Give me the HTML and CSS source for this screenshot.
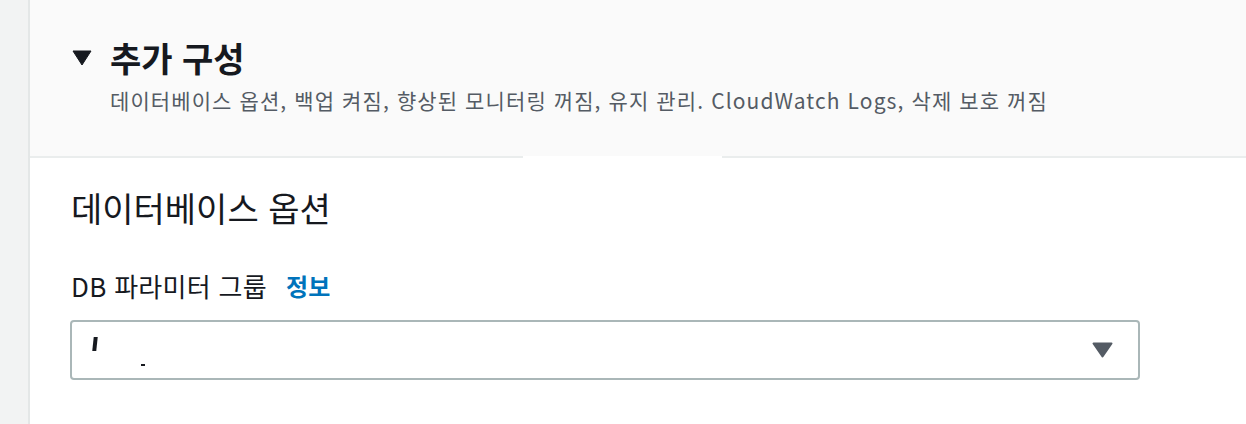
FILE: index.html
```html
<!DOCTYPE html>
<html lang="ko">
<head>
<meta charset="utf-8">
<link rel="stylesheet" href="styles.css">
</head>
<body>
<div class="page">
  <div class="rail"></div>
  <div class="panel">
    <div class="header">
      <div class="title-row">
        <svg class="caret" width="20" height="16" viewBox="0 0 20 16"><path d="M1 1 H19 L10 15 Z" fill="#16191f" stroke="#16191f" stroke-width="1" stroke-linejoin="round"/></svg>
        <h2 class="title">추가 구성</h2>
      </div>
      <div class="desc">데이터베이스 옵션, 백업 켜짐, 향상된 모니터링 꺼짐, 유지 관리. CloudWatch Logs, 삭제 보호 꺼짐</div>
      <div class="patch"></div>
    </div>
    <div class="body">
      <h3 class="section">데이터베이스 옵션</h3>
      <div class="label-row">
        <span class="label">DB 파라미터 그룹</span>
        <a class="info">정보</a>
      </div>
      <div class="select">
        <span class="value"><span class="mark1"></span><span class="mark2"></span></span>
        <svg class="arrow" width="21" height="16" viewBox="0 0 21 16"><path d="M1.5 1.5 H19.5 L10.5 14.5 Z" fill="#545b64" stroke="#545b64" stroke-width="2" stroke-linejoin="round"/></svg>
      </div>
    </div>
  </div>
</div>
</body>
</html>
```

FILE: styles.css
```css
* { box-sizing: border-box; }
html, body { margin: 0; padding: 0; }
body {
  width: 1246px;
  height: 424px;
  overflow: hidden;
  font-family: "Noto Sans CJK KR", "Noto Sans", sans-serif;
  color: #16191f;
  background: #fff;
}
.page {
  display: flex;
  height: 424px;
}
.rail {
  width: 30px;
  flex: none;
  background: #f2f3f3;
  border-right: 2px solid #e4e7e7;
}
.panel {
  flex: 1;
  display: flex;
  flex-direction: column;
  background: #fff;
}
.header {
  position: relative;
  height: 158px;
  background: #fafafa;
  border-bottom: 2px solid #eaeded;
  padding: 38px 0 0 42px;
}
.title-row {
  display: flex;
  align-items: center;
  gap: 18px;
  height: 40px;
}
.caret { flex: none; }
.title {
  margin: 0;
  font-size: 34px;
  font-weight: 700;
  line-height: 40px;
}
.desc {
  margin: 8px 0 0 38px;
  font-size: 21px;
  line-height: 28px;
  color: #545b64;
  letter-spacing: 1.1px;
  white-space: nowrap;
}
.patch {
  position: absolute;
  left: 493px;
  bottom: -2px;
  width: 199px;
  height: 2px;
  background: #fff;
}
.body {
  padding: 30px 0 0 41px;
}
.section {
  margin: 0;
  font-size: 34px;
  font-weight: 400;
  line-height: 40px;
}
.label-row {
  margin-top: 43px;
  display: flex;
  align-items: center;
  gap: 19px;
  height: 30px;
}
.label {
  font-size: 26px;
  line-height: 30px;
  letter-spacing: 0.3px;
}
.info {
  font-size: 24px;
  line-height: 30px;
  font-weight: 700;
  color: #0073bb;
}
.select {
  margin-top: 19px;
  margin-left: -1px;
  width: 1070px;
  height: 60px;
  border: 2px solid #aab7b8;
  border-radius: 4px;
  display: flex;
  align-items: center;
  justify-content: space-between;
  padding: 0 25px 0 21px;
}
.value {
  display: block;
  position: relative;
  align-self: stretch;
  width: 60px;
}
.mark1 {
  position: absolute;
  left: 0;
  top: 15px;
  width: 4px;
  height: 14px;
  background: #16191f;
  transform: skewX(-6deg);
}
.mark2 {
  position: absolute;
  left: 48px;
  top: 42px;
  width: 4px;
  height: 2px;
  background: #16191f;
}
.arrow { flex: none; }
```
